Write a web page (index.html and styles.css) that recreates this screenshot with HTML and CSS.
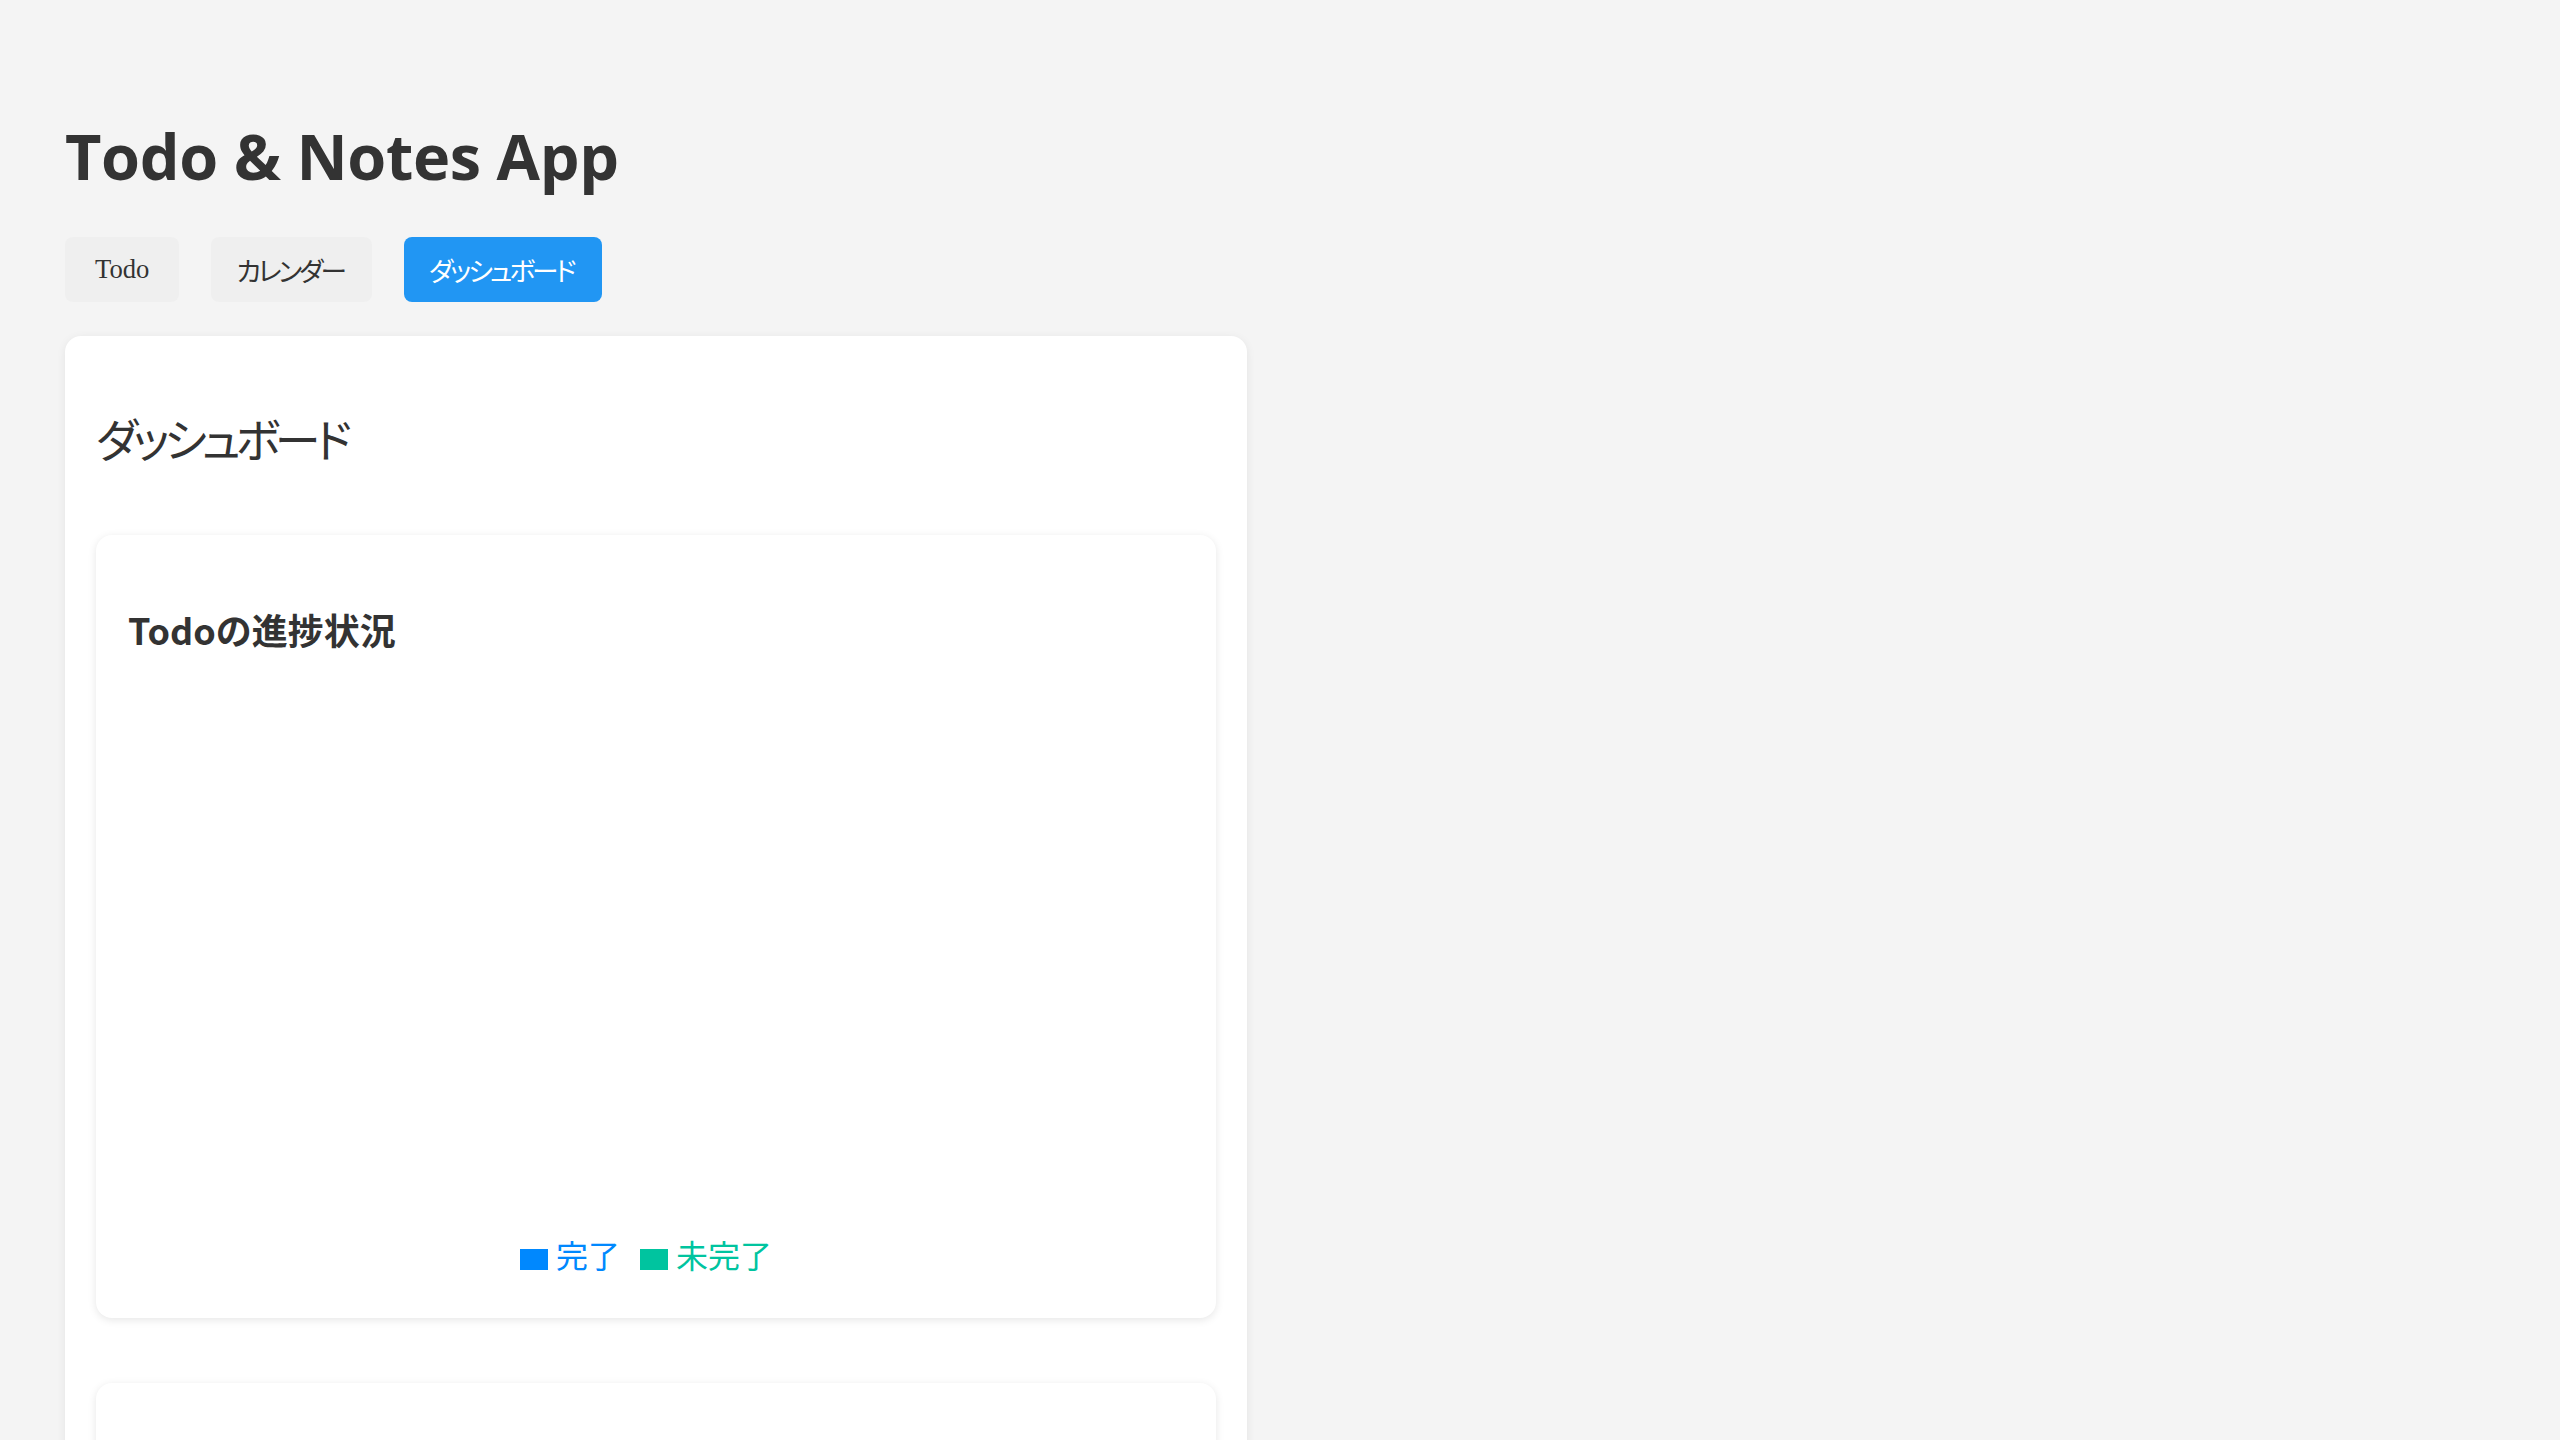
FILE: index.html
```html
<!DOCTYPE html>
<html lang="ja">
<head>
<meta charset="utf-8">
<title>Todo &amp; Notes App</title>
<link rel="stylesheet" href="styles.css">
</head>
<body>
<div class="app">
  <h1 class="app-title">Todo &amp; Notes App</h1>
  <nav class="tabs">
    <button class="tab">Todo</button>
    <button class="tab tab-ja">カレンダー</button>
    <button class="tab tab-ja tab-active">ダッシュボード</button>
  </nav>
  <main class="panel">
    <h2 class="panel-title">ダッシュボード</h2>
    <section class="chart-card">
      <h3 class="chart-title">Todoの進捗状況</h3>
      <div class="chart-area">
        <ul class="legend">
          <li class="legend-item legend-done"><span class="legend-icon"></span><span class="legend-text">完了</span></li>
          <li class="legend-item legend-todo"><span class="legend-icon"></span><span class="legend-text">未完了</span></li>
        </ul>
      </div>
    </section>
    <section class="chart-card chart-card-next"></section>
  </main>
</div>
</body>
</html>
```
FILE: styles.css
```css
html, body {
  margin: 0;
  padding: 0;
}
body {
  background: #f4f4f4;
  color: #333;
  font-family: "Open Sans", "Noto Sans CJK JP", sans-serif;
}
.app {
  padding: 112px 65px 0;
}
.app-title {
  margin: 0;
  font-family: "Open Sans", "Noto Sans CJK JP", sans-serif;
  font-weight: 700;
  font-size: 63px;
  letter-spacing: -0.4px;
  line-height: 87px;
  color: #333;
}
.tabs {
  display: flex;
  gap: 32px;
  margin-top: 38px;
}
.tab {
  height: 65px;
  padding: 0 30px;
  border: none;
  border-radius: 8px;
  background: #efefef;
  color: #333;
  font-family: "Liberation Serif", "Noto Sans CJK JP", serif;
  font-size: 26.67px;
  cursor: pointer;
}
.tab-ja {
  padding: 0 28px 0 25px;
  letter-spacing: -3px;
  font-feature-settings: "palt";
}
.tab-active {
  background: #2196f3;
  color: #fff;
}
.panel {
  box-sizing: border-box;
  width: 1182px;
  margin-top: 34px;
  padding: 0 31px 40px;
  background: #fff;
  border-radius: 16px;
  box-shadow: 0 2px 10px rgba(0, 0, 0, 0.07);
}
.panel-title {
  margin: 0;
  padding-top: 68px;
  font-family: "Noto Sans CJK JP", sans-serif;
  font-feature-settings: "palt";
  font-weight: 400;
  font-size: 46px;
  letter-spacing: -5px;
  line-height: 67px;
  color: #333;
}
.chart-card {
  box-sizing: border-box;
  margin-top: 64px;
  padding: 0 32px 32px;
  background: #fff;
  border-radius: 16px;
  box-shadow: 0 2px 8px rgba(0, 0, 0, 0.1);
}
.chart-title {
  margin: 0;
  padding-top: 68px;
  font-family: "Noto Sans CJK JP", sans-serif;
  font-weight: 700;
  font-size: 36px;
  line-height: 52px;
  color: #333;
}
.chart-area {
  height: 600px;
  margin-top: 31px;
  display: flex;
  flex-direction: column;
  justify-content: flex-end;
}
.legend {
  list-style: none;
  margin: 0 0 12px;
  padding: 0;
  display: flex;
  justify-content: center;
  align-items: center;
  font-family: "Noto Sans CJK JP", sans-serif;
  font-size: 32px;
  line-height: 40px;
}
.legend-item {
  display: flex;
  align-items: center;
  margin-right: 20px;
}
.legend-icon {
  width: 28px;
  height: 21px;
  margin-right: 8px;
  margin-top: 10px;
}
.legend-done { color: #0088fe; }
.legend-done .legend-icon { background: #0088fe; }
.legend-todo { color: #00c49f; }
.legend-todo .legend-icon { background: #00c49f; }
.chart-card-next {
  margin-top: 65px;
  height: 500px;
}
```
